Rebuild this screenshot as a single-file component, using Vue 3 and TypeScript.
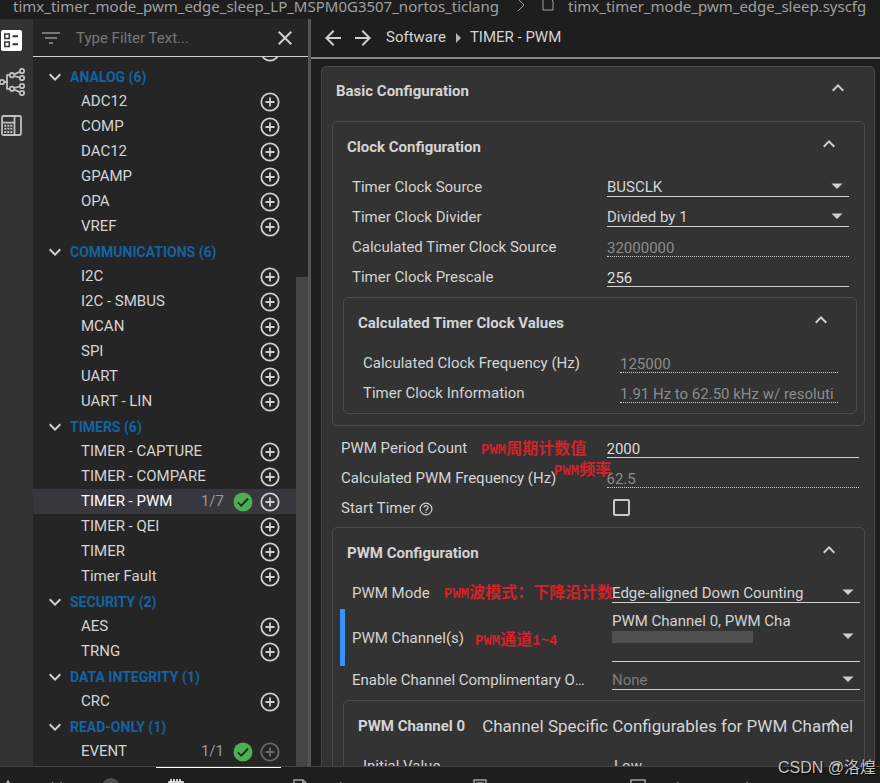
<script setup lang="ts">
import { ref } from 'vue'

interface Module {
  name: string
  count?: string
  locked?: boolean
}
interface Group {
  title: string
  items: Module[]
}

const groups: Group[] = [
  { title: 'ANALOG (6)', items: [{ name: 'ADC12' }, { name: 'COMP' }, { name: 'DAC12' }, { name: 'GPAMP' }, { name: 'OPA' }, { name: 'VREF' }] },
  { title: 'COMMUNICATIONS (6)', items: [{ name: 'I2C' }, { name: 'I2C - SMBUS' }, { name: 'MCAN' }, { name: 'SPI' }, { name: 'UART' }, { name: 'UART - LIN' }] },
  {
    title: 'TIMERS (6)',
    items: [{ name: 'TIMER - CAPTURE' }, { name: 'TIMER - COMPARE' }, { name: 'TIMER - PWM', count: '1/7' }, { name: 'TIMER - QEI' }, { name: 'TIMER' }, { name: 'Timer Fault' }],
  },
  { title: 'SECURITY (2)', items: [{ name: 'AES' }, { name: 'TRNG' }] },
  { title: 'DATA INTEGRITY (1)', items: [{ name: 'CRC' }] },
  { title: 'READ-ONLY (1)', items: [{ name: 'EVENT', count: '1/1', locked: true }] },
]

const selected = ref('TIMER - PWM')
const filter = ref('')
const clockSource = ref('BUSCLK')
const clockDivider = ref('Divided by 1')
const prescale = ref('256')
const period = ref('2000')
const startTimer = ref(false)
const pwmMode = ref('Edge-aligned Down Counting')
const complementary = ref('None')
const initialValue = ref('Low')
</script>

<template>
  <div class="shell">
    <nav class="path" aria-label="File path">
      <span>timx_timer_mode_pwm_edge_sleep_LP_MSPM0G3507_nortos_ticlang</span>
      <svg class="path-sep" viewBox="0 0 10 14"><path d="M2 1l6 6-6 6" /></svg>
      <svg class="path-file" viewBox="0 0 12 14"><path d="M1 1h7l3 3v9H1z" /></svg>
      <span>timx_timer_mode_pwm_edge_sleep.syscfg</span>
    </nav>

    <div class="work">
      <div class="rail">
        <button class="rail-btn" aria-label="Modules">
          <svg viewBox="0 0 24 24">
            <rect x="1" y="1" width="21" height="21" rx="2" fill="#fff" />
            <g fill="none" stroke="#333" stroke-width="1.5">
              <rect x="4.8" y="5" width="4.5" height="4.5" />
              <rect x="4.8" y="13" width="4.5" height="4.5" />
              <path d="M12.5 7.3H18M12.5 15.3H18" stroke-width="2" />
            </g>
          </svg>
        </button>
        <button class="rail-btn" aria-label="Dependency tree">
          <svg class="tree" viewBox="0 0 26 28" fill="none" stroke="#c0c0c0" stroke-width="1.8">
            <circle cx="2" cy="14" r="2.2" />
            <circle cx="12" cy="7.2" r="2.2" />
            <circle cx="12" cy="20.8" r="2.2" />
            <circle cx="22" cy="3" r="2.2" />
            <circle cx="22" cy="10" r="2.2" />
            <circle cx="22" cy="18" r="2.2" />
            <circle cx="22" cy="25" r="2.2" />
            <path d="M4.2 14H7M9.8 7.2H7v13.6h2.8M14 6.3L19.9 3.8M14 8l5.9 1.6M14 20l5.9-1.6M14 21.7l5.9 2.5" />
          </svg>
        </button>
        <button class="rail-btn" aria-label="Device view">
          <svg viewBox="0 0 24 24" fill="none" stroke="#c0c0c0" stroke-width="1.8">
            <rect x="2" y="2" width="19" height="19" rx="1.5" />
            <path d="M14.5 2v19M2 8.6h12.5" />
            <path d="M4.3 11.7h8M4.3 14.8h8M4.3 18h8" stroke-width="2" stroke-dasharray="2 1" />
          </svg>
        </button>
      </div>

      <aside class="side">
        <div class="filter">
          <svg class="ico dim" viewBox="0 0 24 24"><path d="M10 18h4v-2h-4v2zM3 6v2h18V6H3zm3 7h12v-2H6v2z" /></svg>
          <input v-model="filter" type="text" placeholder="Type Filter Text..." aria-label="Type Filter Text" />
          <button class="plain" aria-label="Clear filter" @click="filter = ''">
            <svg class="ico" viewBox="0 0 24 24"><path d="M19 6.41L17.59 5 12 10.59 6.41 5 5 6.41 10.59 12 5 17.59 6.41 19 12 13.41 17.59 19 19 17.59 13.41 12z" /></svg>
          </button>
        </div>
        <div class="side-body">
          <div class="tree-list">
            <div class="row cut">
              <svg class="plus" viewBox="0 0 20 20"><circle cx="10" cy="10" r="8.7" /><path d="M10 5.5v9M5.5 10h9" /></svg>
            </div>
            <section v-for="g in groups" :key="g.title">
              <button class="row group">
                <svg class="ico" viewBox="0 0 24 24"><path d="M16.59 8.59L12 13.17 7.41 8.59 6 10l6 6 6-6z" /></svg>
                <span>{{ g.title }}</span>
              </button>
              <div v-for="m in g.items" :key="m.name" class="row item" :class="{ active: m.name === selected }">
                <a href="#" @click.prevent="selected = m.name">{{ m.name }}</a>
                <span v-if="m.count" class="count">{{ m.count }}</span>
                <svg v-if="m.count" class="ok" viewBox="0 0 20 20">
                  <circle cx="10" cy="10" r="9.5" fill="#4caf50" />
                  <path d="M4.8 10.3l3.4 3.4 7-7.2" fill="none" stroke="#252526" stroke-width="1.8" />
                </svg>
                <button class="plain add" :aria-label="'Add ' + m.name" :disabled="m.locked">
                  <svg class="plus" viewBox="0 0 20 20"><circle cx="10" cy="10" r="8.7" /><path d="M10 5.5v9M5.5 10h9" /></svg>
                </button>
              </div>
            </section>
          </div>
          <div class="scroll"><div class="thumb"></div></div>
        </div>
      </aside>

      <main class="main">
        <header class="bar">
          <button class="plain" aria-label="Back"><svg class="ico" viewBox="0 0 24 24"><path d="M20 11H7.83l5.59-5.59L12 4l-8 8 8 8 1.41-1.41L7.83 13H20v-2z" /></svg></button>
          <button class="plain fwd" aria-label="Forward"><svg class="ico" viewBox="0 0 24 24"><path d="M12 4l-1.41 1.41L16.17 11H4v2h12.17l-5.58 5.59L12 20l8-8z" /></svg></button>
          <a href="#" @click.prevent>Software</a>
          <svg class="tri" viewBox="0 0 6 10"><path d="M0 0l5 5-5 5z" /></svg>
          <a href="#" @click.prevent>TIMER - PWM</a>
        </header>

        <div class="content">
          <section class="card outer">
            <button class="head">
              <h2>Basic Configuration</h2>
              <svg class="ico" viewBox="0 0 24 24"><path d="M12 8l-6 6 1.41 1.41L12 10.83l4.59 4.58L18 14z" /></svg>
            </button>

            <section class="card clock">
              <button class="head">
                <h2>Clock Configuration</h2>
                <svg class="ico" viewBox="0 0 24 24"><path d="M12 8l-6 6 1.41 1.41L12 10.83l4.59 4.58L18 14z" /></svg>
              </button>
              <div class="field">
                <label for="src">Timer Clock Source</label>
                <div class="pick">
                  <select id="src" v-model="clockSource"><option>BUSCLK</option><option>MFCLK</option><option>LFCLK</option></select>
                  <svg class="ico" viewBox="0 0 24 24"><path d="M6.5 9.5l5.5 5.5 5.5-5.5z" /></svg>
                </div>
              </div>
              <div class="field">
                <label for="div">Timer Clock Divider</label>
                <div class="pick">
                  <select id="div" v-model="clockDivider"><option>Divided by 1</option><option>Divided by 2</option></select>
                  <svg class="ico" viewBox="0 0 24 24"><path d="M6.5 9.5l5.5 5.5 5.5-5.5z" /></svg>
                </div>
              </div>
              <div class="field">
                <label for="calc">Calculated Timer Clock Source</label>
                <input id="calc" class="ro" type="text" value="32000000" readonly />
              </div>
              <div class="field">
                <label for="pre">Timer Clock Prescale</label>
                <input id="pre" v-model="prescale" type="text" />
              </div>

              <section class="card values">
                <button class="head">
                  <h2>Calculated Timer Clock Values</h2>
                  <svg class="ico" viewBox="0 0 24 24"><path d="M12 8l-6 6 1.41 1.41L12 10.83l4.59 4.58L18 14z" /></svg>
                </button>
                <div class="field">
                  <label for="freq">Calculated Clock Frequency (Hz)</label>
                  <input id="freq" class="ro" type="text" value="125000" readonly />
                </div>
                <div class="field">
                  <label for="info">Timer Clock Information</label>
                  <input id="info" class="ro" type="text" value="1.91 Hz to 62.50 kHz w/ resoluti" readonly />
                </div>
              </section>
            </section>

            <div class="direct">
              <div class="field">
                <label for="period">PWM Period Count</label>
                <input id="period" v-model="period" type="text" />
                <span class="note n1"><b>PWM</b>周期计数值</span>
              </div>
              <div class="field">
                <label for="pfreq">Calculated PWM Frequency (Hz)</label>
                <input id="pfreq" class="ro" type="text" value="62.5" readonly />
                <span class="note n2"><b>PWM</b>频率</span>
              </div>
              <div class="field">
                <label for="start">Start Timer
                  <svg class="help" viewBox="0 0 14 14"><circle cx="7" cy="7" r="5.9" /><path d="M5 5.6a2 2 0 1 1 3 1.7c-.7.4-1 .7-1 1.4M7 9.7v1.3" /></svg>
                </label>
                <input id="start" v-model="startTimer" type="checkbox" />
              </div>
            </div>

            <section class="card pwm">
              <button class="head">
                <h2>PWM Configuration</h2>
                <svg class="ico" viewBox="0 0 24 24"><path d="M12 8l-6 6 1.41 1.41L12 10.83l4.59 4.58L18 14z" /></svg>
              </button>
              <div class="field">
                <label for="mode">PWM Mode</label>
                <div class="pick">
                  <select id="mode" v-model="pwmMode"><option>Edge-aligned Down Counting</option><option>Edge-aligned Up Counting</option><option>Center Aligned</option></select>
                  <svg class="ico" viewBox="0 0 24 24"><path d="M6.5 9.5l5.5 5.5 5.5-5.5z" /></svg>
                </div>
                <span class="note n3"><b>PWM</b>波模式：下降沿计数</span>
              </div>
              <div class="field multi">
                <label for="chan">PWM Channel(s)</label>
                <button id="chan" class="channels" aria-haspopup="listbox">
                  <span class="chosen">
                    <span class="names">PWM Channel 0, PWM Channel 1</span>
                    <span class="meter"></span>
                  </span>
                  <svg class="ico" viewBox="0 0 24 24"><path d="M6.5 9.5l5.5 5.5 5.5-5.5z" /></svg>
                </button>
                <span class="note n4"><b>PWM</b>通道<b>1~4</b></span>
              </div>
              <div class="field last">
                <label for="comp">Enable Channel Complimentary Output</label>
                <div class="pick none">
                  <select id="comp" v-model="complementary"><option>None</option><option>PWM Channel 0</option></select>
                  <svg class="ico" viewBox="0 0 24 24"><path d="M6.5 9.5l5.5 5.5 5.5-5.5z" /></svg>
                </div>
              </div>

              <section class="card channel">
                <button class="head">
                  <h2>PWM Channel 0</h2>
                  <span class="desc">Channel Specific Configurables for PWM Channel</span>
                  <svg class="ico" viewBox="0 0 24 24"><path d="M12 8l-6 6 1.41 1.41L12 10.83l4.59 4.58L18 14z" /></svg>
                </button>
                <div class="field">
                  <label for="init">Initial Value</label>
                  <div class="pick">
                    <select id="init" v-model="initialValue"><option>Low</option><option>High</option></select>
                    <svg class="ico" viewBox="0 0 24 24"><path d="M6.5 9.5l5.5 5.5 5.5-5.5z" /></svg>
                  </div>
                </div>
              </section>
            </section>
          </section>
        </div>
      </main>
    </div>

    <footer class="tabs">
      <button class="tab t1">
        <svg viewBox="0 0 16 16"><path d="M8 2l7 12H1z" /></svg>Problems<span class="badge">5</span>
      </button>
      <button class="tab t2 on">
        <svg viewBox="0 0 16 16"><path d="M1 3h14v12H1zM4 7h8M3 0v3M6 0v3M9 0v3M12 0v3" /></svg>Connectivity
      </button>
      <button class="tab t3">
        <svg viewBox="0 0 16 16"><path d="M1 15V1h9l5 5v9zM10 1v5h5" /></svg>Debug Output
      </button>
      <button class="tab t4">
        <svg viewBox="0 0 16 16"><path d="M2 15V1h12v14zM5 15V4h6v11" /></svg>GEL Output
      </button>
      <button class="tab t5">
        <svg viewBox="0 0 16 16"><path d="M1 15V1h14v14zM5 5l4 3-4 3" /></svg>Debug Console
      </button>
    </footer>
    <div class="mark">CSDN @洛煌</div>
  </div>
</template>

<style>
body {
  margin: 0;
  background: #1e1e1e;
}
</style>

<style scoped>
.shell {
  position: relative;
  display: flex;
  flex-direction: column;
  height: 100vh;
  overflow: hidden;
  background: #1e1e1e;
  color: #d4d4d4;
  font: 15px/20px Roboto, 'Noto Sans CJK SC', sans-serif;
}
button,
input,
select {
  box-sizing: border-box;
  margin: 0;
  padding: 0;
  border: 0;
  border-radius: 0;
  background: none;
  color: inherit;
  font: inherit;
  outline: 0;
  appearance: none;
}
a {
  color: inherit;
  text-decoration: none;
}
h2 {
  margin: 0;
  font-size: 15px;
  font-weight: 700;
  white-space: nowrap;
}
svg {
  flex: none;
}
.ico {
  display: block;
  width: 24px;
  height: 24px;
  fill: #d0d0d0;
}
.dim {
  fill: #777;
}
.plain {
  display: block;
  flex: none;
}
.path {
  display: flex;
  flex: none;
  align-items: center;
  height: 12px;
  padding: 0 0 7px 13px;
  color: #a0a0a0;
  font: 15px/20px 'Noto Sans', sans-serif;
  white-space: nowrap;
}
.path-sep {
  width: 10px;
  height: 14px;
  margin: 0 16px 2px 17px;
  fill: none;
  stroke: #a0a0a0;
}
.path-file {
  width: 12px;
  height: 14px;
  margin: 0 14px 4px 0;
  fill: none;
  stroke: #a0a0a0;
}
.work {
  display: flex;
  flex: 1;
  min-height: 0;
}
.rail {
  display: flex;
  flex: none;
  flex-direction: column;
  gap: 18px;
  width: 33px;
  padding-top: 10px;
  background: #333;
}
.rail-btn svg {
  display: block;
  width: 24px;
  height: 24px;
}
.rail-btn .tree {
  width: 26px;
  height: 28px;
  margin: -3px 0 0;
}
.side {
  display: flex;
  flex: none;
  flex-direction: column;
  width: 275px;
  border-right: 3px solid #555;
  background: #252526;
}
.filter {
  display: flex;
  flex: none;
  align-items: center;
  height: 37px;
  padding: 0 11px 0 6px;
  border-bottom: 1px solid #d0d0d0;
}
.filter input {
  flex: 1;
  min-width: 0;
  padding-left: 13px;
}
.filter input::placeholder {
  color: #777;
  opacity: 1;
}
.side-body {
  display: flex;
  flex: 1;
  min-height: 0;
}
.tree-list {
  flex: 1;
  overflow: hidden;
}
.row {
  display: flex;
  box-sizing: border-box;
  align-items: center;
  width: 100%;
  height: 25px;
  padding-right: 16px;
}
.cut {
  justify-content: flex-end;
  margin-top: -18px;
}
.group {
  padding-left: 10px;
  gap: 3px;
  color: #1263a3;
  font-size: 14px;
  font-weight: 700;
}
.item {
  padding-left: 48px;
}
.item a {
  flex: 1;
  padding-bottom: 2px;
}
.active {
  background: #37373d;
}
.active a {
  color: #fff;
}
.count {
  padding-bottom: 2px;
  color: #999;
}
.ok {
  width: 20px;
  height: 20px;
  margin: 0 7px 0 9px;
}
.plus {
  display: block;
  width: 20px;
  height: 20px;
  fill: none;
  stroke: #d0d0d0;
  stroke-width: 1.8;
}
.add:disabled {
  opacity: 0.4;
}
.scroll {
  display: flex;
  flex: none;
  align-items: flex-end;
  width: 12px;
}
.thumb {
  width: 100%;
  height: 69%;
  background: #464646;
}
.main {
  display: flex;
  flex: 1;
  flex-direction: column;
  min-width: 0;
}
.bar {
  display: flex;
  flex: none;
  align-items: center;
  height: 38px;
  padding-left: 10px;
  border-bottom: 2px solid #8a8a8a;
}
.bar a {
  padding-bottom: 2px;
}
.fwd {
  margin: 0 11px 0 6px;
}
.tri {
  width: 6px;
  height: 10px;
  margin: 0 8px 0 10px;
  fill: #b0b0b0;
}
.content {
  flex: 1;
  min-height: 0;
  overflow: hidden;
  padding: 7px 5px 0 10px;
}
.card {
  border: 1px solid #4b4b4b;
  border-radius: 5px;
}
.outer {
  padding: 0 9px 20px 10px;
  border-color: #484848;
  background: #333;
}
.head {
  display: flex;
  align-items: center;
  justify-content: space-between;
  width: 100%;
  height: 50px;
  padding: 0 23px 0 14px;
  text-align: left;
}
.head .ico {
  margin-bottom: 6px;
}
.outer > .head {
  height: 54px;
  padding: 0 15px 6px 4px;
}
.clock {
  padding: 0 0 11px;
}
.clock > .field {
  grid-template-columns: 255fr 242fr;
  margin: 0 15px 0 19px;
}
.values {
  margin: 5px 7px 0 10px;
  padding-bottom: 5px;
}
.values .field {
  grid-template-columns: 257fr 218fr;
  margin: 0 18px 0 19px;
}
.direct {
  padding: 7px 6px 4px 9px;
}
.direct .field {
  grid-template-columns: 265fr 252fr;
}
.field {
  position: relative;
  display: grid;
  align-items: start;
  height: 30px;
}
.field label {
  overflow: hidden;
  padding-top: 5px;
  text-overflow: ellipsis;
  white-space: nowrap;
}
.field input[type='text'] {
  width: 100%;
  min-width: 0;
  height: 25px;
  padding-top: 8px;
  border-bottom: 1px solid #d0d0d0;
  color: #ddd;
}
.field input.ro {
  border-bottom-style: dotted;
  color: #8c8c8c;
}
.field input[type='checkbox'] {
  width: 17px;
  height: 17px;
  margin: 6px 0 0 6px;
  border: 2px solid #c8c8c8;
  border-radius: 2px;
}
.pick {
  display: grid;
  box-sizing: border-box;
  min-width: 0;
  height: 25px;
  border-bottom: 1px solid #d0d0d0;
}
.pick select,
.pick svg {
  grid-area: 1 / 1;
}
.pick select {
  width: 100%;
  height: 24px;
  padding: 5px 26px 0 0;
}
.pick option {
  color: #ddd;
  background: #333;
}
.pick svg {
  justify-self: end;
  margin-top: 2px;
  pointer-events: none;
}
.none select {
  color: #7d7d7d;
}
.help {
  width: 14px;
  height: 14px;
  margin-bottom: -3px;
  fill: none;
  stroke: #d0d0d0;
  stroke-width: 1.2;
}
.pwm {
  overflow: hidden;
}
.pwm > .field {
  grid-template-columns: 260fr 248fr;
  margin: 0 4px 0 19px;
}
.pwm > .multi {
  height: 57px;
  margin: 1px 4px 0 7px;
  padding-left: 7px;
  border-left: 5px solid #3794ff;
}
.multi label {
  align-self: center;
  padding: 0;
}
.channels {
  display: flex;
  align-items: center;
  justify-content: space-between;
  height: 53px;
  min-width: 0;
  padding-top: 2px;
  border-bottom: 1px solid #d0d0d0;
  text-align: left;
}
.chosen {
  display: flex;
  flex: none;
  flex-direction: column;
  width: 72%;
  height: 50px;
}
.names {
  overflow: hidden;
  white-space: nowrap;
}
.meter {
  width: 79%;
  height: 12px;
  background: #505050;
}
.pwm > .last {
  margin-top: -1px;
  height: 35px;
}
.last label {
  margin-right: 22px;
}
.channel {
  width: 524px;
  margin-left: 10px;
}
.channel .head {
  gap: 17px;
}
.channel .desc {
  flex: 1;
  width: 0;
  font-size: 17px;
  white-space: nowrap;
}
.channel .field {
  grid-template-columns: 250fr 233fr;
  margin: 0 20px 0 19px;
}
.note {
  position: absolute;
  color: #d3222a;
  font: 700 16px/20px 'Noto Sans CJK SC', sans-serif;
  white-space: nowrap;
}
.note b {
  font: 700 14px/20px 'Liberation Mono', monospace;
}
.n1 {
  top: 4px;
  left: 140px;
}
.n2 {
  top: -5px;
  left: 213px;
}
.n3 {
  top: 3px;
  left: 92px;
}
.n4 {
  top: 19px;
  left: 130px;
}
.tabs {
  display: flex;
  flex: none;
  align-items: flex-start;
  height: 16px;
  border-top: 1px solid #444;
  color: #a0a0a0;
  font: 14px/20px 'Open Sans', sans-serif;
}
.tab {
  display: flex;
  flex: none;
  align-items: center;
  gap: 12px;
  height: 34px;
  padding: 8px 0 0 12px;
  white-space: nowrap;
}
.tab svg {
  width: 16px;
  height: 16px;
  margin-bottom: 3px;
  fill: none;
  stroke: currentColor;
  stroke-width: 1.5;
}
.t1 {
  min-width: 156px;
  padding-left: 0;
}
.t2 {
  min-width: 125px;
}
.t3 {
  min-width: 179px;
}
.t4 {
  min-width: 158px;
}
.badge {
  width: 18px;
  height: 18px;
  margin-bottom: 2px;
  border-radius: 9px;
  background: #4d4d4d;
  font-size: 11px;
  line-height: 18px;
}
.on {
  border-top: 1px solid #fff;
  color: #fff;
}
.mark {
  position: absolute;
  right: 4px;
  bottom: 3px;
  color: #c4c4c4;
  font: 16px/24px 'Liberation Sans', 'Noto Sans CJK SC', sans-serif;
  text-shadow: 1px 1px 1px #000;
}
</style>
